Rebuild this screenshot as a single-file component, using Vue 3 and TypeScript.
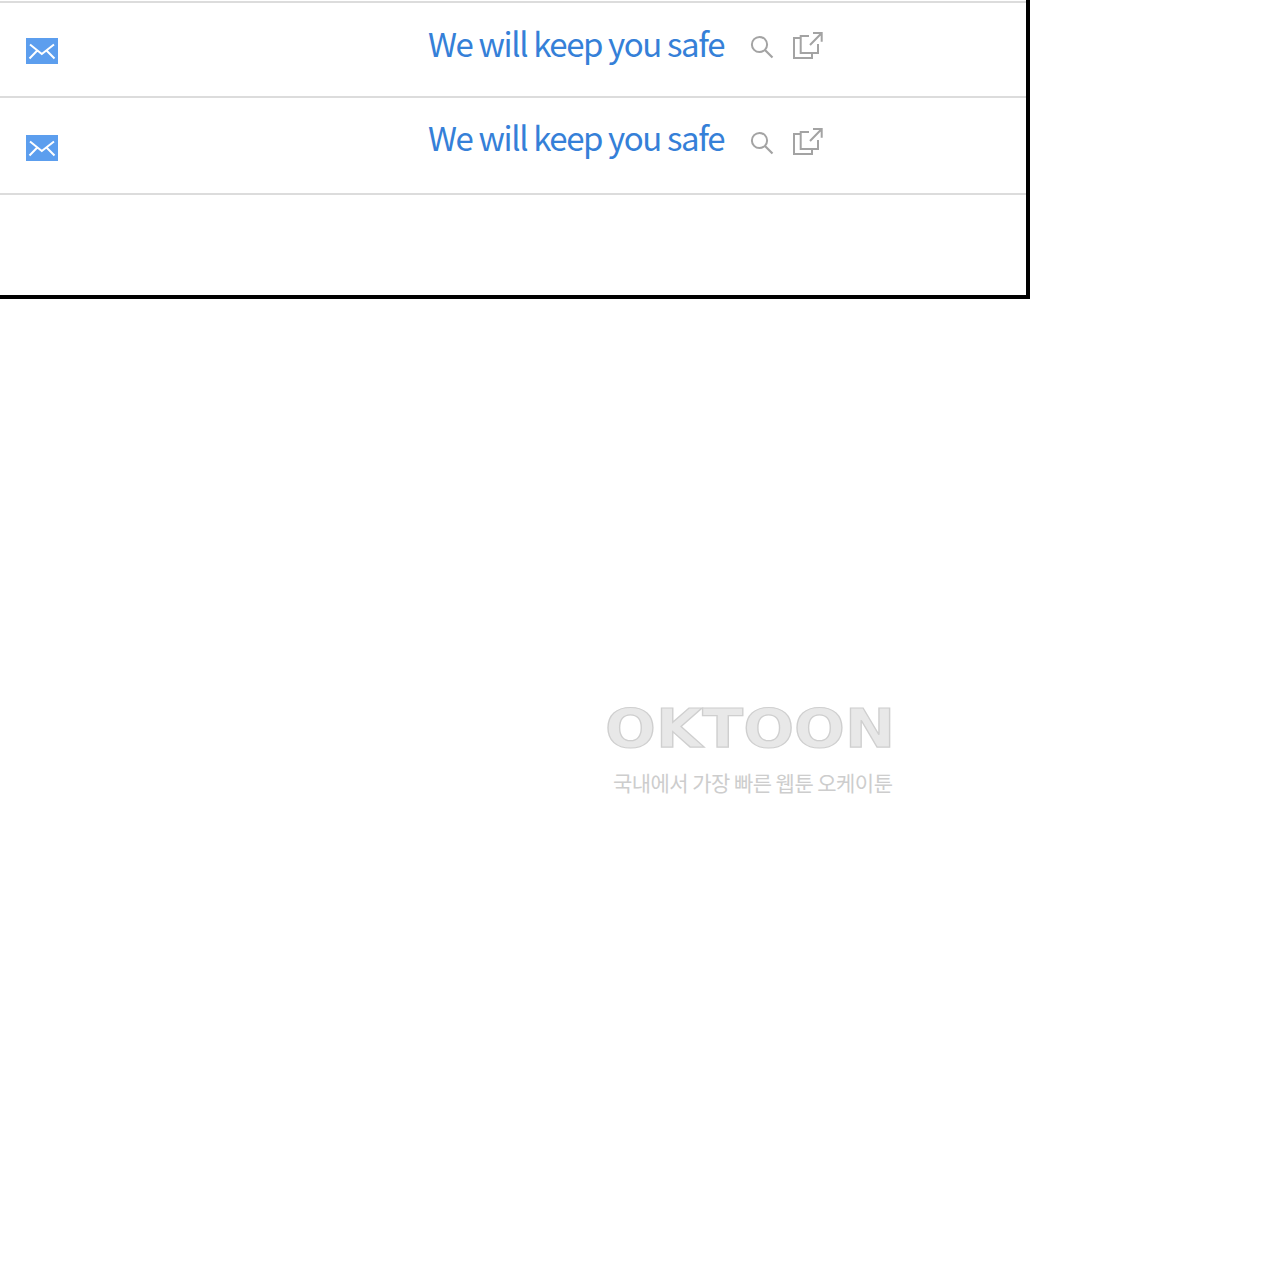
<script setup lang="ts">
const rows = [
  { id: 1, title: 'We will keep you safe' },
  { id: 2, title: 'We will keep you safe' },
]
</script>

<template>
  <div class="page">
    <div class="frame">
      <div v-for="row in rows" :key="row.id" class="row">
        <div class="mail-cell">
          <svg class="mail" viewBox="0 0 32 26" width="32" height="26">
            <rect width="32" height="26" fill="#5c9eee" />
            <path d="M4 6.5 15.8 16 28 6.5M3.5 20.5 10.8 13M28.5 20.5 21 13" fill="none" stroke="#fff" stroke-width="2" />
          </svg>
        </div>
        <a class="title">{{ row.title }}</a>
        <svg class="search" viewBox="0 0 26 26" width="26" height="26">
          <circle cx="10.5" cy="10.5" r="7.6" fill="none" stroke="#a3a3a3" stroke-width="2" />
          <path d="M16 16 23.5 23.5" fill="none" stroke="#a3a3a3" stroke-width="2.2" />
        </svg>
        <svg class="share" viewBox="0 0 30 28" width="30" height="28">
          <path
            d="M7.7 6H1V26H19V21M16 4H7.7V21H25V12M17 13 28.7 1M20 1H28.7V9.7"
            fill="none"
            stroke="#a3a3a3"
            stroke-width="2"
          />
        </svg>
      </div>
      <div class="row-empty"></div>
    </div>

    <div class="footer">
      <div class="logo">OKTOON</div>
      <div class="slogan">국내에서 가장 빠른 웹툰 오케이툰</div>
    </div>
  </div>
</template>

<style>
html,
body {
  background: #fff;
}
</style>

<style scoped>
.page {
  width: 1280px;
  height: 1280px;
  overflow: hidden;
  background: #fff;
}

.frame {
  width: 1030px;
  height: 299px;
  box-sizing: border-box;
  padding-top: 1px;
  border-right: 4px solid #000;
  border-bottom: 4px solid #000;
}

.row {
  display: flex;
  align-items: flex-start;
  height: 95px;
  box-sizing: border-box;
  border-top: 2px solid #dcdcdc;
}

.row:nth-child(2) {
  height: 97px;
}

.row:nth-child(2) .mail {
  margin-top: 37px;
}

.row:nth-child(2) .title {
  margin-top: 15px;
}

.row:nth-child(2) .search {
  margin-top: 32px;
}

.row:nth-child(2) .share {
  margin-top: 30px;
}

.row-empty {
  border-top: 2px solid #dcdcdc;
}

.mail-cell {
  width: 428px;
  padding-left: 26px;
  box-sizing: border-box;
}

.mail {
  display: block;
  margin-top: 35px;
}

.title {
  margin-top: 16px;
  width: 296px;
  margin-left: -1px;
  padding-left: 1px;
  font-family: 'Noto Sans CJK KR', 'Noto Sans', sans-serif;
  font-size: 33px;
  line-height: 48px;
  letter-spacing: -1.4px;
  white-space: nowrap;
  color: #3580d8;
}

.search {
  margin: 31px 0 0 25px;
}

.share {
  margin: 29px 0 0 18px;
}

.footer {
  margin: 403px 0 0 605px;
}

.logo {
  width: max-content;
  font-family: 'DejaVu Sans', sans-serif;
  font-size: 53px;
  line-height: 54px;
  font-weight: 700;
  white-space: nowrap;
  color: #e8e8e8;
  -webkit-text-stroke: 1.2px #cfcfcf;
  transform: scaleX(1.13);
  transform-origin: left center;
}

.slogan {
  margin-top: 11px;
  margin-left: 8px;
  font-family: 'Noto Sans CJK KR', sans-serif;
  font-size: 21px;
  line-height: 30px;
  letter-spacing: -0.55px;
  white-space: nowrap;
  color: #cdcdcd;
}
</style>
